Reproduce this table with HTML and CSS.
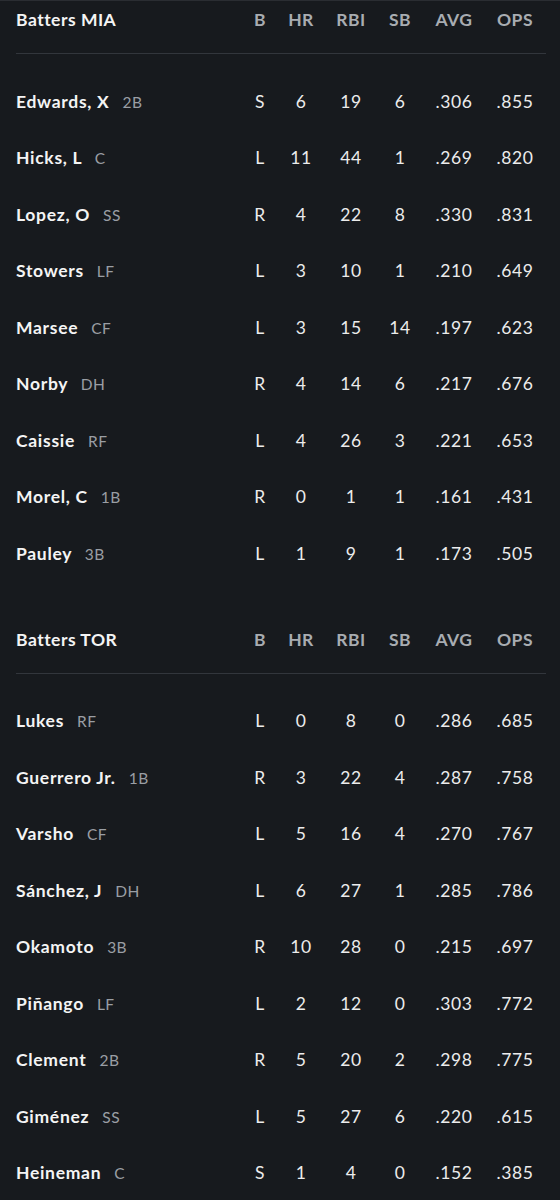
FILE: index.html
```html
<!DOCTYPE html>
<html lang="en">
<head>
    <meta charset="UTF-8">
    <meta name="viewport" content="width=device-width, initial-scale=1.0">
    <title>Batters</title>
    <link rel="stylesheet" href="styles.css">
</head>
<body>
    <!-- MIA -->
    <div class="section">
        <div class="box-head">
            <div class="title">Batters MIA</div>
            <div>B</div><div>HR</div><div>RBI</div><div>SB</div><div>AVG</div><div>OPS</div>
        </div>
        <div class="divider"></div>
        <div class="rows">
            <div class="row"><div class="name">Edwards, X <span class="pos">2B</span></div><div>S</div><div>6</div><div>19</div><div>6</div><div>.306</div><div>.855</div></div>
            <div class="row"><div class="name">Hicks, L <span class="pos">C</span></div><div>L</div><div>11</div><div>44</div><div>1</div><div>.269</div><div>.820</div></div>
            <div class="row"><div class="name">Lopez, O <span class="pos">SS</span></div><div>R</div><div>4</div><div>22</div><div>8</div><div>.330</div><div>.831</div></div>
            <div class="row"><div class="name">Stowers <span class="pos">LF</span></div><div>L</div><div>3</div><div>10</div><div>1</div><div>.210</div><div>.649</div></div>
            <div class="row"><div class="name">Marsee <span class="pos">CF</span></div><div>L</div><div>3</div><div>15</div><div>14</div><div>.197</div><div>.623</div></div>
            <div class="row"><div class="name">Norby <span class="pos">DH</span></div><div>R</div><div>4</div><div>14</div><div>6</div><div>.217</div><div>.676</div></div>
            <div class="row"><div class="name">Caissie <span class="pos">RF</span></div><div>L</div><div>4</div><div>26</div><div>3</div><div>.221</div><div>.653</div></div>
            <div class="row"><div class="name">Morel, C <span class="pos">1B</span></div><div>R</div><div>0</div><div>1</div><div>1</div><div>.161</div><div>.431</div></div>
            <div class="row"><div class="name">Pauley <span class="pos">3B</span></div><div>L</div><div>1</div><div>9</div><div>1</div><div>.173</div><div>.505</div></div>
        </div>
    </div>

    <!-- TOR -->
    <div class="section">
        <div class="box-head">
            <div class="title">Batters TOR</div>
            <div>B</div><div>HR</div><div>RBI</div><div>SB</div><div>AVG</div><div>OPS</div>
        </div>
        <div class="divider"></div>
        <div class="rows">
            <div class="row"><div class="name">Lukes <span class="pos">RF</span></div><div>L</div><div>0</div><div>8</div><div>0</div><div>.286</div><div>.685</div></div>
            <div class="row"><div class="name">Guerrero Jr. <span class="pos">1B</span></div><div>R</div><div>3</div><div>22</div><div>4</div><div>.287</div><div>.758</div></div>
            <div class="row"><div class="name">Varsho <span class="pos">CF</span></div><div>L</div><div>5</div><div>16</div><div>4</div><div>.270</div><div>.767</div></div>
            <div class="row"><div class="name">Sánchez, J <span class="pos">DH</span></div><div>L</div><div>6</div><div>27</div><div>1</div><div>.285</div><div>.786</div></div>
            <div class="row"><div class="name">Okamoto <span class="pos">3B</span></div><div>R</div><div>10</div><div>28</div><div>0</div><div>.215</div><div>.697</div></div>
            <div class="row"><div class="name">Piñango <span class="pos">LF</span></div><div>L</div><div>2</div><div>12</div><div>0</div><div>.303</div><div>.772</div></div>
            <div class="row"><div class="name">Clement <span class="pos">2B</span></div><div>R</div><div>5</div><div>20</div><div>2</div><div>.298</div><div>.775</div></div>
            <div class="row"><div class="name">Giménez <span class="pos">SS</span></div><div>L</div><div>5</div><div>27</div><div>6</div><div>.220</div><div>.615</div></div>
            <div class="row"><div class="name">Heineman <span class="pos">C</span></div><div>S</div><div>1</div><div>4</div><div>0</div><div>.152</div><div>.385</div></div>
        </div>
    </div>
</body>
</html>
```

FILE: styles.css
```css
/* General */
body {
    margin: 0;
    background: #171a1e;
    border-top: 1px solid #2a2d32;
    font-family: Lato, 'Open Sans', sans-serif;
    color: #ececec;
}

/* Section */
.section + .section {
    margin-top: 39px;
}

.box-head,
.row {
    display: grid;
    grid-template-columns: 1fr 40px 42px 58px 40px 68px 54px;
    padding: 0 18px 0 16px;
    align-items: center;
    text-align: center;
}

.box-head {
    padding-top: 8px;
    padding-bottom: 22px;
    line-height: 22px;
    font-size: 17.5px;
    font-weight: 700;
    letter-spacing: 0.5px;
    color: #a8acb1;
}

.box-head .title {
    text-align: left;
    color: #f4f4f4;
}

.divider {
    height: 1px;
    margin: 0 14px 0 16px;
    background: #32363c;
}

/* Rows */
.rows {
    padding-top: 19px;
}

.row {
    height: 56.5px;
    font-size: 17.5px;
    letter-spacing: 0.6px;
}

.name {
    text-align: left;
    font-weight: 700;
    letter-spacing: 0.7px;
    color: #f4f4f4;
}

.pos {
    margin-left: 8px;
    font-size: 15.5px;
    font-weight: 400;
    letter-spacing: 0.5px;
    color: #9a9ea4;
}
```
